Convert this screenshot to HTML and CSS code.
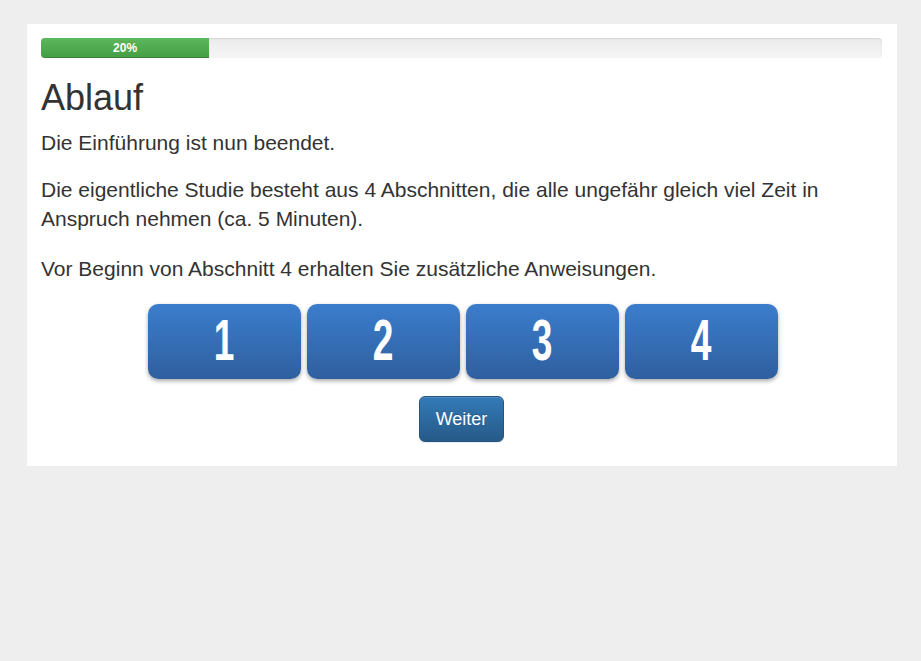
FILE: index.html
```html
<!DOCTYPE html>
<html lang="de">
<head>
<meta charset="utf-8">
<title>Ablauf</title>
<link rel="stylesheet" href="styles.css">
</head>
<body>
<div class="panel">
  <div class="progress"><div class="progress-bar" style="width:20%">20%</div></div>
  <h1 class="title">Ablauf</h1>
  <p class="lead first">Die Einführung ist nun beendet.</p>
  <p class="lead">Die eigentliche Studie besteht aus 4 Abschnitten, die alle ungefähr gleich viel Zeit in Anspruch nehmen (ca. 5 Minuten).</p>
  <p class="lead last">Vor Beginn von Abschnitt 4 erhalten Sie zusätzliche Anweisungen.</p>
  <div class="steps">
    <div class="step"><span>1</span></div>
    <div class="step"><span>2</span></div>
    <div class="step"><span>3</span></div>
    <div class="step"><span>4</span></div>
  </div>
  <div class="actions"><button class="btn-next">Weiter</button></div>
</div>
</body>
</html>
```

FILE: styles.css
```css
html, body {
  margin: 0;
  padding: 0;
  background: #eeeeee;
}
body {
  font-family: "Liberation Sans", Arial, sans-serif;
  color: #333333;
  padding: 24px 24px 0 27px;
  height: 661px;
  box-sizing: border-box;
}
.panel {
  background: #ffffff;
  width: 870px;
  box-sizing: border-box;
  padding: 14px 15px 24px 14px;
}
.progress {
  height: 20px;
  border-radius: 4px;
  overflow: hidden;
  background: linear-gradient(to bottom, #ebebeb 0%, #f5f5f5 100%);
  box-shadow: inset 0 1px 2px rgba(0,0,0,0.1);
  display: flex;
}
.progress-bar {
  height: 20px;
  line-height: 20px;
  font-size: 12px;
  font-weight: bold;
  color: #fff;
  text-align: center;
  background: linear-gradient(to bottom, #5cb85c 0%, #449d44 100%);
  box-shadow: inset 0 -1px 0 rgba(0,0,0,0.15);
}
.title {
  font-family: "Liberation Sans", Arial, sans-serif;
  font-weight: 500;
  font-size: 36px;
  line-height: 1.1;
  margin: 20px 0 10px;
  color: #333;
}
.lead {
  font-size: 21px;
  line-height: 1.4;
  margin: 0 0 20px;
}
.lead.first {
  margin-bottom: 18px;
}
.lead.last {
  margin-bottom: 21px;
}
.steps {
  display: flex;
  justify-content: center;
  gap: 6px;
  padding-left: 3px;
}
.step {
  width: 153px;
  height: 75px;
  box-sizing: border-box;
  padding-bottom: 4px;
  border-radius: 10px;
  background: linear-gradient(to bottom, #3b7dcc 0%, #2f5f9f 100%);
  box-shadow: 0 2px 4px rgba(0,0,0,0.35);
  display: flex;
  align-items: center;
  justify-content: center;
  color: #fff;
}
.step span {
  font-family: "Liberation Sans", Arial, sans-serif;
  font-weight: bold;
  font-size: 58px;
  line-height: 1;
  display: inline-block;
  transform: scaleX(0.64);
}
.actions {
  display: flex;
  justify-content: center;
  margin-top: 17px;
}
.btn-next {
  font-family: "Liberation Sans", Arial, sans-serif;
  font-size: 18px;
  line-height: 24px;
  padding: 10px 16px;
  color: #fff;
  border: 1px solid #245580;
  border-radius: 6px;
  background: linear-gradient(to bottom, #337ab7 0%, #265a88 100%);
  box-shadow: inset 0 1px 0 rgba(255,255,255,0.15), 0 1px 1px rgba(0,0,0,0.075);
  text-shadow: 0 -1px 0 rgba(0,0,0,0.2);
  cursor: pointer;
}
```
